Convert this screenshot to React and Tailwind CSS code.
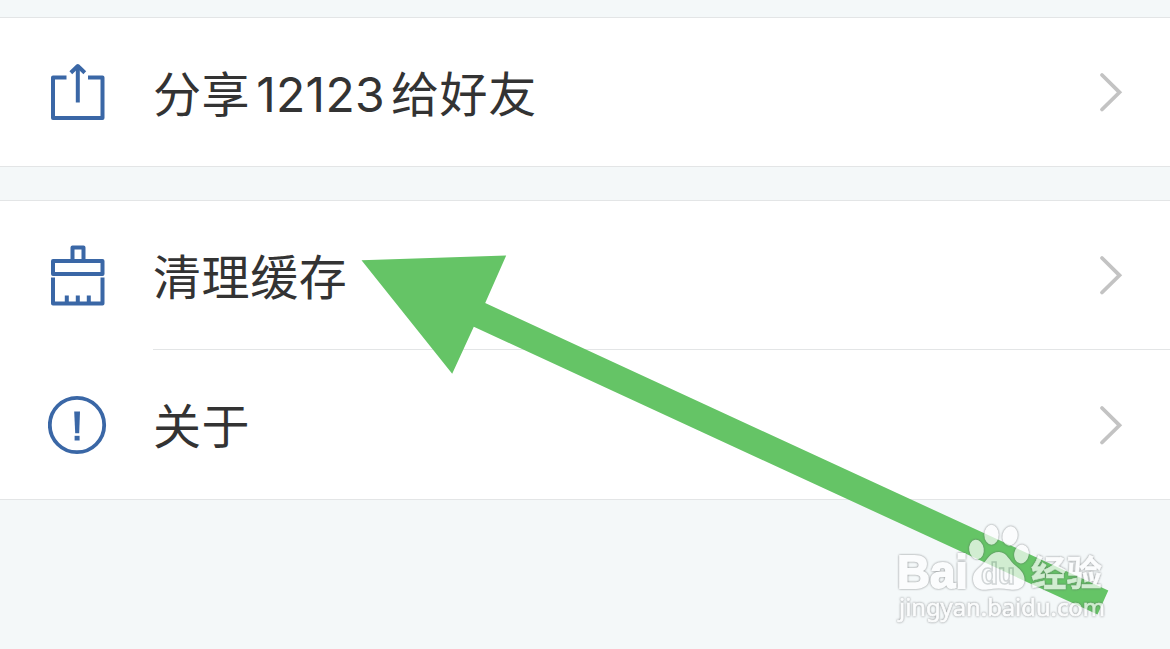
import { clsx } from 'clsx'

const ShareIcon = () => (
  <svg width="60" height="64" viewBox="0 0 60 64" fill="none" stroke="#3a67a6" strokeWidth="4" strokeLinejoin="round">
    <path d="M18.5 17.5H5V58H54.5V17.5H40" />
    <path d="M29.8 42.5V6" />
    <path d="M22.8 12.8L29.8 6L36.8 12.8" />
  </svg>
)

const BrushIcon = () => (
  <svg width="60" height="64" viewBox="0 0 60 64" fill="none" stroke="#3a67a6" strokeWidth="4" strokeLinejoin="round">
    <path d="M24.5 17V4.5H35.5V17" />
    <path d="M5 18H54.5V31H5Z" />
    <path d="M5 34.5V60.5H54.5V34.5" />
    <path d="M18.8 60V52.5M29.8 60V52.5M40.8 60V52.5" />
  </svg>
)

const AboutIcon = () => (
  <svg width="60" height="64" viewBox="0 0 60 64" fill="none">
    <circle cx="29" cy="32" r="27.2" stroke="#3a67a6" strokeWidth="3.8" />
    <path d="M26.2 18.5H32L31.2 40.3H27.2Z" fill="#3a67a6" />
    <path d="M26.6 42.8H31.6V47.5H26.6Z" fill="#3a67a6" />
  </svg>
)

const Chevron = () => (
  <svg width="26" height="42" viewBox="0 0 26 42" fill="none" stroke="#c3c3c3" strokeWidth="3.8" strokeLinecap="round">
    <path d="M4 4L21.5 21.3L4 38.5" />
  </svg>
)

const Row = ({ icon, children, className, iconClassName }) => (
  <div className="flex items-center pl-12">
    <div className={clsx('w-[105px] shrink-0', iconClassName)}>{icon}</div>
    <div className={clsx('flex flex-1 items-center justify-between pr-[46px]', className)}>
      <div className="flex items-baseline pt-[5px] text-[48px] leading-[60px] tracking-[0.6px]">{children}</div>
      <Chevron />
    </div>
  </div>
)

const Arrow = () => (
  <svg className="absolute left-0 top-0" width="1170" height="649" viewBox="0 0 1170 649">
    <path d="M361.5 260.3L506.2 255.6L485.2 303L1108.3 590.5L1097.5 614.5L473.8 326.8L452.2 373.7Z" fill="#65c466" />
  </svg>
)

const Watermark = () => (
  <svg className="absolute left-[880px] top-[510px]" width="240" height="130" viewBox="0 0 240 130">
    <g fill="#fff" className="opacity-70 drop-shadow-[0_0_1.3px_#55585b]">
      {/* paw */}
      <ellipse cx="96.5" cy="39.5" rx="7.3" ry="9.8" transform="rotate(-8 96.5 39.5)" />
      <ellipse cx="111.5" cy="24.7" rx="7.2" ry="10" />
      <ellipse cx="130" cy="26" rx="7.6" ry="9.7" transform="rotate(12 130 26)" />
      <ellipse cx="141.5" cy="44" rx="7.3" ry="9.5" transform="rotate(10 141.5 44)" />
      <path d="M119 42C127 42 129 51 136 56C142 61 145 65 144.5 71C144 78 138 80.5 130 79.5C122 78 115 78 108 79.5C99 81 93 77 93 69C93 62 97 60 102 55C108 49 110 42 119 42Z" />
      <text x="17" y="78" textLength="71" lengthAdjust="spacingAndGlyphs" stroke="#fff" strokeWidth="1.8" className="font-['Liberation_Sans',Arial,sans-serif] text-[46px] font-bold">Bai</text>
      <text x="101" y="73.5" textLength="34" lengthAdjust="spacingAndGlyphs" stroke="#c4c8ca" strokeWidth="1.6" className="font-['Liberation_Sans',Arial,sans-serif] text-[29px] font-bold">du</text>
      <text x="151" y="76" textLength="71" lengthAdjust="spacingAndGlyphs" stroke="#fff" strokeWidth="0.5" className="font-['Noto_Sans_CJK_SC',sans-serif] text-[35px] font-bold">经验</text>
      <text x="19" y="105.5" textLength="206" lengthAdjust="spacingAndGlyphs" stroke="#fff" strokeWidth="0.7" className="font-['Noto_Sans',sans-serif] text-[23px]">jingyan.baidu.com</text>
    </g>
  </svg>
)

const App = () => {
  return (
    <div className="relative h-[649px] w-[1170px] overflow-hidden bg-[#f4f8f9] pt-[17px] font-['Inter','Noto_Sans_CJK_SC',sans-serif] text-[#333]">
      <div className="border-y border-[#e3e5e6] bg-white">
        <Row icon={<ShareIcon />} className="h-[148px]">
          <span>分享</span>
          <span className="ml-[6px] mr-[6px] tracking-[0.3px]">12123</span>
          <span>给好友</span>
        </Row>
      </div>

      <div className="mt-[33px] border-y border-[#e3e5e6] bg-white">
        <Row icon={<BrushIcon />} className="h-[149px] border-b border-[#e3e5e6]" iconClassName="pb-[2px]">清理缓存</Row>
        <Row icon={<AboutIcon />} className="h-[149px]">关于</Row>
      </div>

      <Arrow />
      <Watermark />
    </div>
  )
}

export default App
